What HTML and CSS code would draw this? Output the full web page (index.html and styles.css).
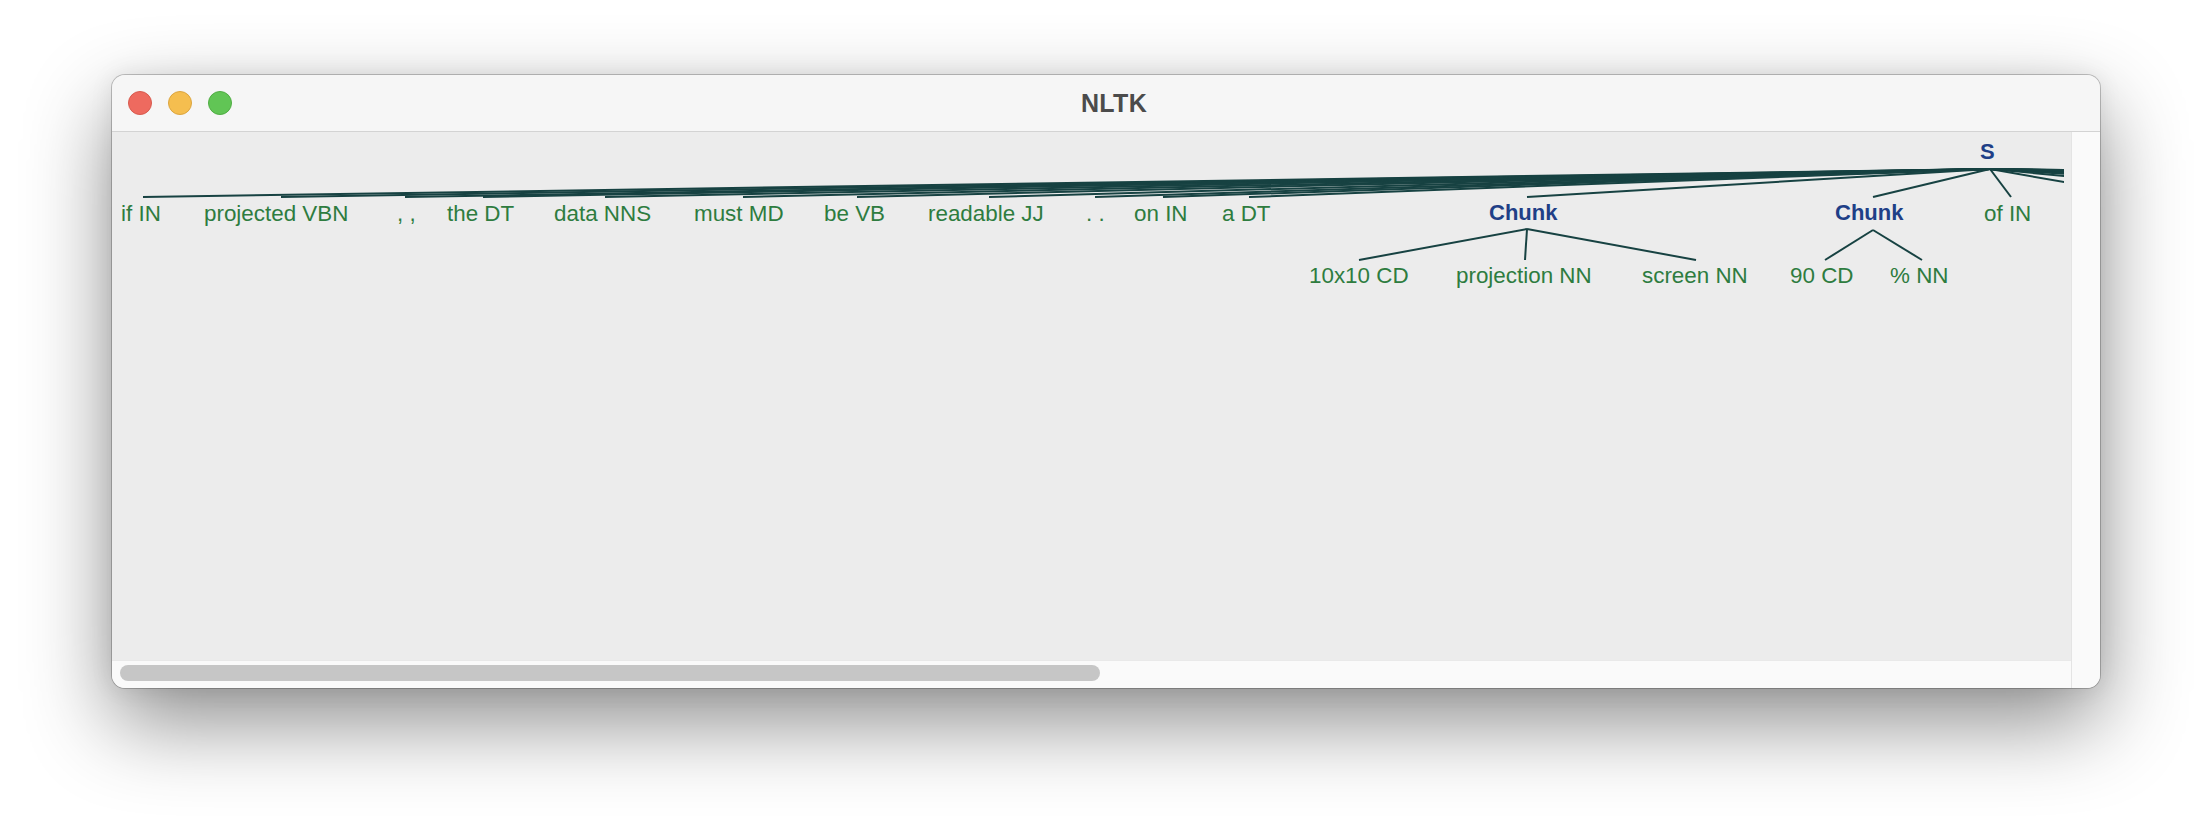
FILE: index.html
```html
<!DOCTYPE html>
<html>
<head>
<meta charset="utf-8">
<title>NLTK</title>
<link rel="stylesheet" href="styles.css">
</head>
<body>
<div class="window">
  <div class="titlebar">
    <div class="lights">
      <span class="light red"></span>
      <span class="light yellow"></span>
      <span class="light green"></span>
    </div>
    <div class="title">NLTK</div>
  </div>
  <div class="body">
    <div class="main">
      <div class="canvas">
        <svg class="tree" width="1959" height="528" viewBox="112 133 1959 528" xmlns="http://www.w3.org/2000/svg">
          <defs>
            <clipPath id="clip"><rect x="112" y="133" width="1952" height="528"/></clipPath>
          </defs>
          <g class="branches" clip-path="url(#clip)">
            <line x1="1990" y1="170" x2="143" y2="198"/>
            <line x1="1990" y1="170" x2="281" y2="198"/>
            <line x1="1990" y1="170" x2="405" y2="198"/>
            <line x1="1990" y1="170" x2="483" y2="198"/>
            <line x1="1990" y1="170" x2="605" y2="198"/>
            <line x1="1990" y1="170" x2="743" y2="198"/>
            <line x1="1990" y1="170" x2="857" y2="198"/>
            <line x1="1990" y1="170" x2="989" y2="198"/>
            <line x1="1990" y1="170" x2="1095" y2="198"/>
            <line x1="1990" y1="170" x2="1163" y2="198"/>
            <line x1="1990" y1="170" x2="1249" y2="198"/>
            <line x1="1990" y1="170" x2="1527" y2="198"/>
            <line x1="1990" y1="170" x2="1873" y2="198"/>
            <line x1="1990" y1="170" x2="2011" y2="198"/>
            <line x1="1990" y1="170" x2="2149" y2="198"/>
            <line x1="1990" y1="170" x2="2290" y2="198"/>
            <line x1="1990" y1="170" x2="2420" y2="198"/>
            <line x1="1990" y1="170" x2="2560" y2="198"/>
            <line x1="1990" y1="170" x2="2700" y2="198"/>
            <line x1="1990" y1="170" x2="2860" y2="198"/>
            <line x1="1990" y1="170" x2="3020" y2="198"/>
            <line x1="1990" y1="170" x2="3200" y2="198"/>
            <line x1="1990" y1="170" x2="3400" y2="198"/>
            <line x1="1990" y1="170" x2="3620" y2="198"/>
            <line x1="1990" y1="170" x2="3850" y2="198"/>
            <line x1="1990" y1="170" x2="4100" y2="198"/>
            <line x1="1527" y1="230" x2="1359" y2="261"/>
            <line x1="1527" y1="230" x2="1525" y2="261"/>
            <line x1="1527" y1="230" x2="1696" y2="261"/>
            <line x1="1873" y1="231" x2="1825" y2="261"/>
            <line x1="1873" y1="231" x2="1922" y2="261"/>
          </g>
          <text class="node" x="1980" y="160">S</text>
          <text class="leaf" x="121" y="222">if IN</text>
          <text class="leaf" x="204" y="222">projected VBN</text>
          <text class="leaf" x="397" y="222">, ,</text>
          <text class="leaf" x="447" y="222">the DT</text>
          <text class="leaf" x="554" y="222">data NNS</text>
          <text class="leaf" x="694" y="222">must MD</text>
          <text class="leaf" x="824" y="222">be VB</text>
          <text class="leaf" x="928" y="222">readable JJ</text>
          <text class="leaf" x="1086" y="222">. .</text>
          <text class="leaf" x="1134" y="222">on IN</text>
          <text class="leaf" x="1222" y="222">a DT</text>
          <text class="node" x="1489" y="221">Chunk</text>
          <text class="node" x="1835" y="221">Chunk</text>
          <text class="leaf" x="1984" y="222">of IN</text>
          <text class="leaf" x="1309" y="284">10x10 CD</text>
          <text class="leaf" x="1456" y="284">projection NN</text>
          <text class="leaf" x="1642" y="284">screen NN</text>
          <text class="leaf" x="1790" y="284">90 CD</text>
          <text class="leaf" x="1890" y="284">% NN</text>
        </svg>
      </div>
      <div class="hscroll"><div class="thumb"></div></div>
    </div>
    <div class="vscroll"></div>
  </div>
</div>
</body>
</html>
```

FILE: styles.css
```css
html, body {
  margin: 0;
  padding: 0;
  background: #ffffff;
}
body {
  width: 2212px;
  height: 836px;
  padding: 75px 0 0 112px;
  box-sizing: border-box;
  font-family: "Liberation Sans", Arial, sans-serif;
  overflow: hidden;
}
.window {
  width: 1988px;
  height: 613px;
  border-radius: 13px;
  overflow: hidden;
  background: #ececec;
  box-shadow: 0 0 0 1px rgba(0,0,0,0.22), 0 34px 85px rgba(0,0,0,0.45), 0 0 24px rgba(0,0,0,0.08);
  display: flex;
  flex-direction: column;
}
.titlebar {
  height: 57px;
  box-sizing: border-box;
  background: #f6f6f6;
  border-bottom: 1px solid #d3d3d3;
  display: flex;
  align-items: center;
}
.lights {
  display: flex;
  gap: 16px;
  padding-left: 16px;
  margin-top: -1px;
}
.light {
  width: 24px;
  height: 24px;
  border-radius: 50%;
  box-sizing: border-box;
}
.red { background: #ee6a5f; border: 1px solid #d85a4e; }
.yellow { background: #f5be4f; border: 1px solid #dca53f; }
.green { background: #61c555; border: 1px solid #50ad43; }
.title {
  flex: 1;
  text-align: center;
  margin-left: -104px;
  font-weight: bold;
  font-size: 25px;
  color: #4b4b4b;
  letter-spacing: 0.3px;
}
.body {
  flex: 1;
  display: flex;
}
.main {
  width: 1959px;
  display: flex;
  flex-direction: column;
}
.canvas {
  height: 528px;
  background: #ececec;
  overflow: hidden;
}
.tree {
  display: block;
}
.branches line {
  stroke: #174242;
  stroke-width: 2;
  stroke-linecap: butt;
}
.leaf {
  font-family: "Liberation Sans", Arial, sans-serif;
  font-size: 22.4px;
  fill: #2e7c3f;
}
.node {
  font-family: "Liberation Sans", Arial, sans-serif;
  font-size: 22px;
  font-weight: bold;
  fill: #1f3f87;
}
.hscroll {
  flex: 1;
  background: #fafafa;
  border-top: 1px solid #e9e9e9;
  padding: 4px 0 0 8px;
  box-sizing: border-box;
}
.thumb {
  width: 980px;
  height: 16px;
  border-radius: 8px;
  background: #c6c6c6;
}
.vscroll {
  flex: 1;
  background: #fafafa;
  border-left: 1px solid #e4e4e4;
}
```
